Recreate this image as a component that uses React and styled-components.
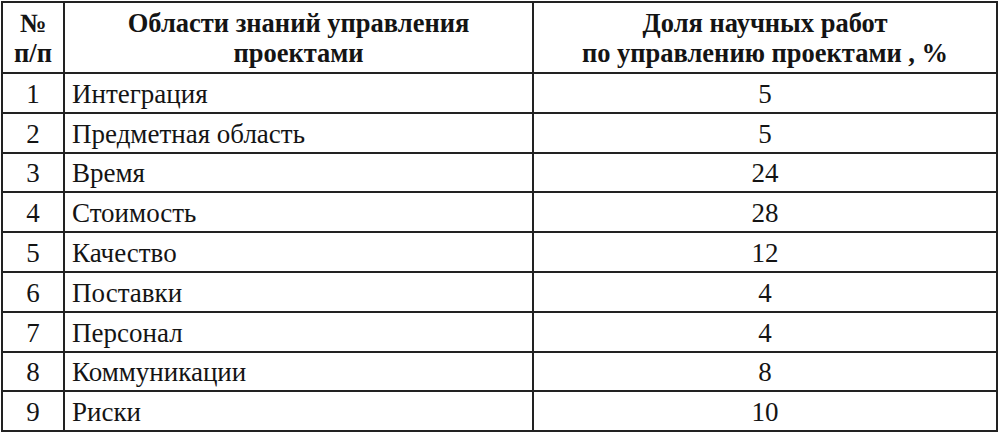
import React from "react";
import styled, { createGlobalStyle } from "styled-components";

const GlobalStyle = createGlobalStyle`
  html, body {
    margin: 0;
    padding: 0;
    background: #fff;
  }
`;

const Page = styled.div`
  width: 1000px;
  height: 432px;
  padding: 1px 2px 0 1px;
  box-sizing: border-box;
  background: #fff;
`;

const Table = styled.table`
  width: 997px;
  border-collapse: collapse;
  table-layout: fixed;
`;

const HeadRow = styled.tr`
  height: 71px;
`;

const Row = styled.tr`
  height: 39.8px;
`;

const HeadCell = styled.th`
  border: 2px solid #222;
  padding: 1px 4px 0;
  font-family: "Liberation Serif", "DejaVu Serif", serif;
  color: #141414;
  font-size: 26.5px;
  font-weight: bold;
  line-height: 30px;
  text-align: center;
  vertical-align: middle;
`;

const Cell = styled.td`
  border: 2px solid #222;
  padding: 2px ${(p) => (p.align === "left" ? "7px" : "4px")} 0;
  font-family: "Liberation Serif", "DejaVu Serif", serif;
  color: #141414;
  font-size: 27px;
  line-height: 30px;
  text-align: ${(p) => p.align || "center"};
  vertical-align: middle;
  white-space: nowrap;
`;

const rows = [
  ["Интеграция", 5],
  ["Предметная область", 5],
  ["Время", 24],
  ["Стоимость", 28],
  ["Качество", 12],
  ["Поставки", 4],
  ["Персонал", 4],
  ["Коммуникации", 8],
  ["Риски", 10],
];

export default function App() {
  return (
    <Page>
      <GlobalStyle />
      <Table>
        <colgroup>
          <col style={{ width: "62px" }} />
          <col style={{ width: "469px" }} />
          <col />
        </colgroup>
        <thead>
          <HeadRow>
            <HeadCell>
              №
              <br />
              п/п
            </HeadCell>
            <HeadCell>
              Области знаний управления
              <br />
              проектами
            </HeadCell>
            <HeadCell>
              Доля научных работ
              <br />
              по управлению проектами , %
            </HeadCell>
          </HeadRow>
        </thead>
        <tbody>
          {rows.map(([name, share], i) => (
            <Row key={name}>
              <Cell>{i + 1}</Cell>
              <Cell align="left">{name}</Cell>
              <Cell>{share}</Cell>
            </Row>
          ))}
        </tbody>
      </Table>
    </Page>
  );
}
